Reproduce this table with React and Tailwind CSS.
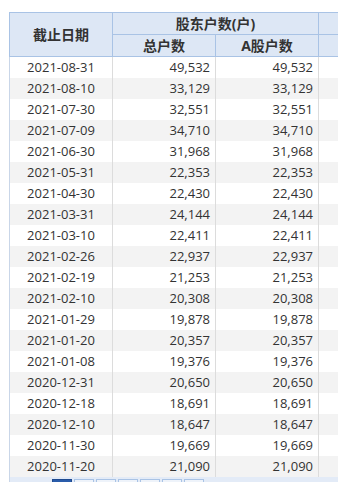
import React from "react";

const rows = [
  ["2021-08-31", "49,532", "49,532"],
  ["2021-08-10", "33,129", "33,129"],
  ["2021-07-30", "32,551", "32,551"],
  ["2021-07-09", "34,710", "34,710"],
  ["2021-06-30", "31,968", "31,968"],
  ["2021-05-31", "22,353", "22,353"],
  ["2021-04-30", "22,430", "22,430"],
  ["2021-03-31", "24,144", "24,144"],
  ["2021-03-10", "22,411", "22,411"],
  ["2021-02-26", "22,937", "22,937"],
  ["2021-02-19", "21,253", "21,253"],
  ["2021-02-10", "20,308", "20,308"],
  ["2021-01-29", "19,878", "19,878"],
  ["2021-01-20", "20,357", "20,357"],
  ["2021-01-08", "19,376", "19,376"],
  ["2020-12-31", "20,650", "20,650"],
  ["2020-12-18", "18,691", "18,691"],
  ["2020-12-10", "18,647", "18,647"],
  ["2020-11-30", "19,669", "19,669"],
  ["2020-11-20", "21,090", "21,090"],
];

export default function App() {
  return (
    <div
      className="w-[338px] h-[482px] overflow-hidden bg-white text-[#333]"
      style={{ fontFamily: '"Open Sans", "Noto Sans CJK SC", sans-serif' }}
    >
      <div className="pt-[12px] pl-[9px] w-[480px]">
        <table className="border-collapse table-fixed w-[412px] text-[13px]">
          <colgroup>
            <col className="w-[103px]" />
            <col className="w-[103px]" />
            <col className="w-[103px]" />
            <col className="w-[103px]" />
          </colgroup>
          <thead>
            <tr className="h-[22px]">
              <th
                rowSpan={2}
                className="border border-[#a9c3e5] bg-[#dde7f5] font-bold text-[14px] text-center p-0"
              >
                截止日期
              </th>
              <th
                colSpan={2}
                className="border border-[#a9c3e5] bg-[#dde7f5] font-bold text-[14px] text-center p-0"
              >
                股东户数(户)
              </th>
              <th className="border border-[#a9c3e5] bg-[#dde7f5] p-0"></th>
            </tr>
            <tr className="h-[22px]">
              <th className="border border-[#a9c3e5] bg-[#dde7f5] font-bold text-[14px] text-center p-0">
                总户数
              </th>
              <th className="border border-[#a9c3e5] bg-[#dde7f5] font-bold text-[14px] text-center p-0">
                A股户数
              </th>
              <th className="border border-[#a9c3e5] bg-[#dde7f5] p-0"></th>
            </tr>
          </thead>
          <tbody>
            {rows.map((r, i) => (
              <tr
                key={r[0]}
                className={"h-[21px] " + (i % 2 === 1 ? "bg-[#f3f3f3]" : "bg-white")}
              >
                <td className="border-l border-l-[#c9d6e8] border-r border-r-[#dcdcdc] text-center p-0 leading-[21px]">
                  {r[0]}
                </td>
                <td className="border-r border-r-[#dcdcdc] text-right pr-[5px] p-0 leading-[21px]">
                  {r[1]}
                </td>
                <td className="border-r border-r-[#dcdcdc] text-right pr-[5px] p-0 leading-[21px]">
                  {r[2]}
                </td>
                <td className="p-0"></td>
              </tr>
            ))}
          </tbody>
        </table>
        <div className="h-[10px] w-[412px] bg-[#e3ebf7] border-l border-[#c9d6e8] flex items-start gap-[2px] pl-[42px] pt-[2px]">
          <div className="w-[20px] h-[8px] bg-[#2a5caa] border border-[#1f4a8f]"></div>
          <div className="w-[20px] h-[8px] border border-[#a9c3e5] bg-[#eef3fa]"></div>
          <div className="w-[20px] h-[8px] border border-[#a9c3e5] bg-[#eef3fa]"></div>
          <div className="w-[20px] h-[8px] border border-[#a9c3e5] bg-[#eef3fa]"></div>
          <div className="w-[20px] h-[8px] border border-[#a9c3e5] bg-[#eef3fa]"></div>
          <div className="w-[20px] h-[8px] border border-[#a9c3e5] bg-[#eef3fa]"></div>
          <div className="w-[20px] h-[8px] border border-[#a9c3e5] bg-[#eef3fa]"></div>
        </div>
      </div>
    </div>
  );
}
